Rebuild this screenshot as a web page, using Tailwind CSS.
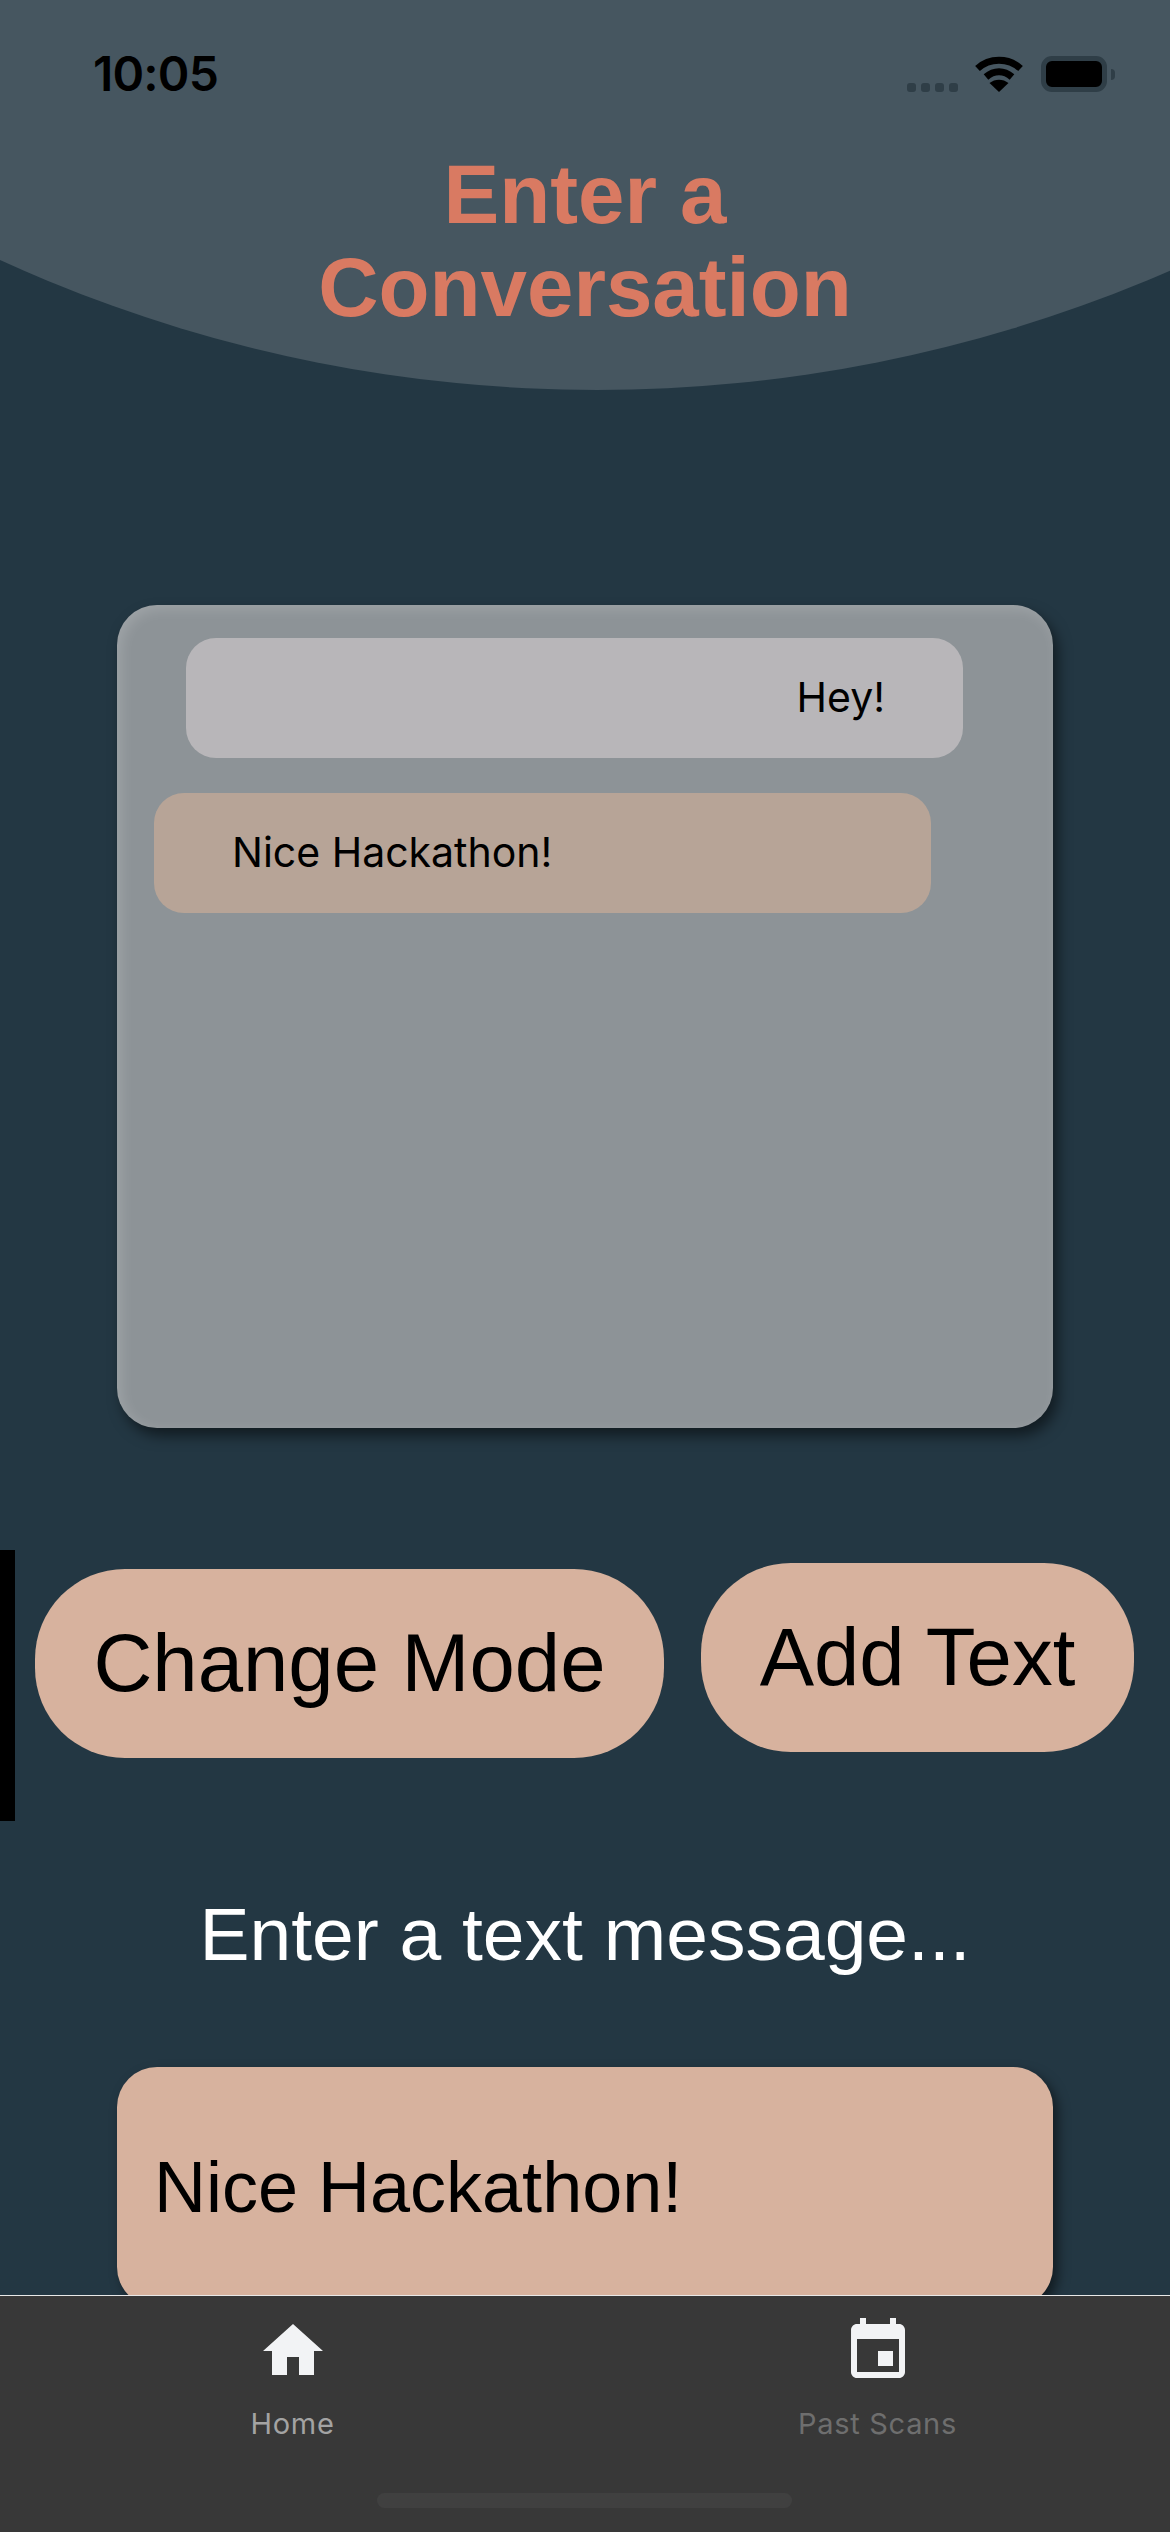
<!DOCTYPE html>
<html lang="en">
<head>
  <meta charset="UTF-8" />
  <meta name="viewport" content="width=device-width, initial-scale=1" />
  <title>Enter a Conversation</title>
  <script src="https://cdn.jsdelivr.net/npm/@tailwindcss/browser@4"></script>
</head>
<body class="bg-[#233743] font-['Liberation_Sans',sans-serif]">
  <div class="relative w-[1170px] h-[2532px] overflow-hidden flex flex-col bg-[#233743]">

    <!-- Curved header background -->
    <div class="absolute left-[-839px] top-[-2482px] w-[2872px] h-[2872px] rounded-full bg-[#465660]"></div>
    <!-- Side bar on the left edge -->
    <div class="absolute left-0 top-[1550px] w-[15px] h-[271px] bg-black"></div>

    <main class="relative flex-1 min-h-0 overflow-hidden flex flex-col">
      <!-- Status bar -->
      <div class="h-[148px] shrink-0 flex items-center justify-between pl-[93px] pr-[55px]">
        <span class="font-['Inter',sans-serif] font-semibold text-[48px] leading-none tracking-[-0.8px] text-black">10:05</span>
        <div class="flex items-center">
          <div class="flex gap-[5px] mt-[27px] mr-[17px]">
            <span class="w-[9px] h-[9px] rounded-[3px] bg-[#2f3e47]"></span>
            <span class="w-[9px] h-[9px] rounded-[3px] bg-[#2f3e47]"></span>
            <span class="w-[9px] h-[9px] rounded-[3px] bg-[#2f3e47]"></span>
            <span class="w-[9px] h-[9px] rounded-[3px] bg-[#2f3e47]"></span>
          </div>
          <svg class="w-[48px] h-[36px] mr-[18px]" viewBox="0 0 48 36" fill="none">
            <path d="M2.5 12.5C14.5 1.5 33.5 1.5 45.5 12.5" stroke="#000" stroke-width="7"/>
            <path d="M11 21C19 14 29 14 37 21" stroke="#000" stroke-width="7"/>
            <path d="M24 36L14.5 27C20 22.5 28 22.5 33.5 27Z" fill="#000"/>
          </svg>
          <div class="w-[66px] h-[36px] rounded-[11px] border-[5px] border-[#2f3e47] bg-black"></div>
          <div class="w-[4px] h-[11px] ml-[4px] rounded-r-full bg-[#2f3e47]"></div>
        </div>
      </div>

      <h1 class="w-[560px] mx-auto text-center font-bold text-[83.5px] leading-[93px] text-[#d97a62]">Enter a Conversation</h1>

      <!-- Conversation card -->
      <section class="mt-[271px] mx-[117px] h-[823px] shrink-0 rounded-[40px] bg-[#8d9397] shadow-[5px_8px_14px_rgba(0,0,0,0.5),inset_4px_4px_14px_rgba(255,255,255,0.16)] font-['Inter',sans-serif] text-[41px] text-black">
        <div class="mt-[33px] ml-[69px] w-[777px] h-[120px] rounded-[30px] bg-[#b8b6b9] flex items-center justify-end pr-[78px]">Hey!</div>
        <div class="mt-[35px] ml-[37px] w-[777px] h-[120px] rounded-[30px] bg-[#b7a497] flex items-center pl-[78px]">Nice Hackathon!</div>
      </section>

      <!-- Actions -->
      <div class="mt-[135px] pl-[35px] flex items-start gap-[37px] text-[81.5px] text-black">
        <button class="mt-[6px] w-[629px] h-[189px] rounded-[90px] bg-[#d7b29e]">Change Mode</button>
        <button class="w-[433px] h-[189px] rounded-[90px] bg-[#d7b29e]">Add Text</button>
      </div>

      <p class="mt-[131px] text-center text-[75px] leading-[90px] text-white">Enter a text message...</p>

      <div class="mt-[88px] mx-[117px] h-[240px] shrink-0 rounded-[40px] bg-[#d7b29e] shadow-[5px_6px_12px_rgba(0,0,0,0.5)] flex items-center pl-[37px] text-[72px] text-black">Nice Hackathon!</div>
    </main>

    <!-- Tab bar -->
    <nav class="relative h-[237px] shrink-0 border-t border-[#e8e8e8] bg-[#383838] font-['Inter',sans-serif] text-[29px]">
      <div class="grid grid-cols-2 pt-[19px]">
        <div class="flex flex-col items-center text-[#a3a3a3]">
          <svg class="w-[72px] h-[72px]" viewBox="0 0 24 24" fill="#f2f3f5"><path d="M10 20v-6h4v6h5v-8h3L12 3 2 12h3v8z"/></svg>
          <span class="mt-[15px] tracking-[0.7px]">Home</span>
        </div>
        <div class="flex flex-col items-center text-[#6e6e6e]">
          <svg class="w-[72px] h-[72px]" viewBox="0 0 24 24" fill="#f2f3f5"><path d="M17 12h-5v5h5v-5zM16 1v2H8V1H6v2H5c-1.11 0-1.99.9-1.99 2L3 19c0 1.1.89 2 2 2h14c1.1 0 2-.9 2-2V5c0-1.1-.9-2-2-2h-1V1h-2zm3 18H5V8h14v11z"/></svg>
          <span class="mt-[15px] tracking-[0.7px]">Past Scans</span>
        </div>
      </div>
      <div class="absolute left-[377px] bottom-[24px] w-[415px] h-[15px] rounded-full bg-[#404040]"></div>
    </nav>
  </div>
</body>
</html>
